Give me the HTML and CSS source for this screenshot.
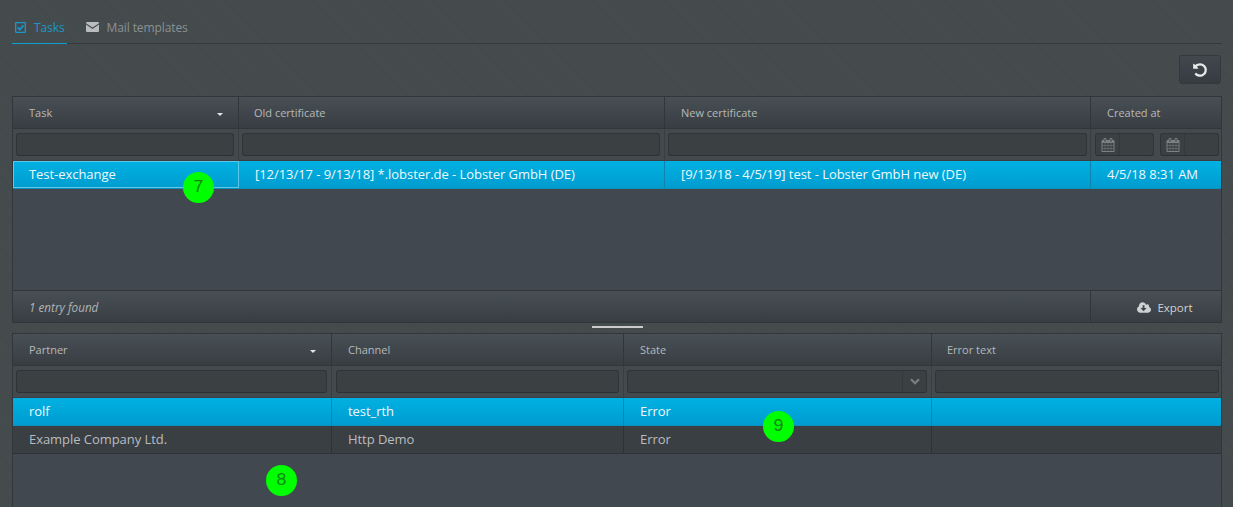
FILE: index.html
```html
<!DOCTYPE html>
<html lang="en">
<head>
<meta charset="utf-8">
<title>Tasks</title>
<link rel="stylesheet" href="styles.css">
</head>
<body>
<div class="page">
  <nav class="tabs">
    <a class="tab active">
      <svg class="tab-icon" viewBox="0 0 12 12"><path d="M1.500 0.700h9a.8.8 0 0 1 .8.8v9a.8.8 0 0 1-.8.8h-9a.8.8 0 0 1-.8-.8v-9a.8.8 0 0 1 .8-.8z" fill="none" stroke="currentColor" stroke-width="1.500"/><path d="M3 5.800l2.300 2.300L9.300 3.700" fill="none" stroke="currentColor" stroke-width="1.900"/></svg>
      Tasks
    </a>
    <a class="tab">
      <svg class="tab-icon mail" viewBox="0 0 13 10"><path d="M0 1a1 1 0 0 1 1-1h11a1 1 0 0 1 1 1v.3L6.500 5.600 0 1.300z" fill="currentColor"/><path d="M0 2.600l6.500 4.300L13 2.600V9a1 1 0 0 1-1 1H1a1 1 0 0 1-1-1z" fill="currentColor"/></svg>
      Mail templates
    </a>
  </nav>

  <div class="toolbar">
    <button class="icon-btn" type="button" aria-label="Reset">
      <svg viewBox="0 0 1792 1792" width="16" height="16"><path fill="currentColor" d="M1664 896q0 156-61 298t-164 245-245 164-298 61q-172 0-327-72.500t-264-204.500q-7-10-6.500-22.500t8.500-20.500l137-138q10-9 25-9 16 2 23 12 73 95 179 147t225 52q104 0 198.500-40.500t163.500-109.500 109.500-163.500 40.500-198.500-40.500-198.500-109.500-163.500-163.500-109.500-198.500-40.500q-98 0-188 35.500t-160 101.500l137 138q31 30 14 69-17 40-59 40h-448q-26 0-45-19t-19-45v-448q0-42 40-59 39-17 69 14l130 129q107-101 244.500-156.500t284.500-55.500q156 0 298 61t245 164 164 245 61 298z"/></svg>
    </button>
  </div>

  <section class="grid grid-top">
    <div class="row head">
      <div class="cell">Task<span class="sort"></span></div>
      <div class="cell">Old certificate</div>
      <div class="cell">New certificate</div>
      <div class="cell">Created at</div>
    </div>
    <div class="row filter">
      <div class="cell"><div class="input"></div></div>
      <div class="cell"><div class="input"></div></div>
      <div class="cell"><div class="input"></div></div>
      <div class="cell dates">
        <div class="input date"><span class="addon"><svg viewBox="0 0 1792 1792" width="14" height="14"><path fill="currentColor" d="M192 1664h288v-288h-288v288zm352 0h320v-288h-320v288zm-352-352h288v-320h-288v320zm352 0h320v-320h-320v320zm-352-384h288v-288h-288v288zm736 736h320v-288h-320v288zm-384-736h320v-288h-320v288zm768 736h288v-288h-288v288zm-384-352h320v-320h-320v320zm-352-864v-288q0-13-9.500-22.500t-22.500-9.500h-64q-13 0-22.500 9.500t-9.500 22.500v288q0 13 9.500 22.500t22.500 9.500h64q13 0 22.500-9.500t9.500-22.500zm736 864h288v-320h-288v320zm-384-384h320v-288h-320v288zm384 0h288v-288h-288v288zm32-480v-288q0-13-9.500-22.500t-22.500-9.500h-64q-13 0-22.500 9.500t-9.500 22.500v288q0 13 9.500 22.500t22.500 9.500h64q13 0 22.500-9.500t9.500-22.500zm384-64v1280q0 52-38 90t-90 38h-1408q-52 0-90-38t-38-90v-1280q0-52 38-90t90-38h128v-96q0-66 47-113t113-47h64q66 0 113 47t47 113v96h384v-96q0-66 47-113t113-47h64q66 0 113 47t47 113v96h128q52 0 90 38t38 90z"/></svg></span></div>
        <div class="input date"><span class="addon"><svg viewBox="0 0 1792 1792" width="14" height="14"><path fill="currentColor" d="M192 1664h288v-288h-288v288zm352 0h320v-288h-320v288zm-352-352h288v-320h-288v320zm352 0h320v-320h-320v320zm-352-384h288v-288h-288v288zm736 736h320v-288h-320v288zm-384-736h320v-288h-320v288zm768 736h288v-288h-288v288zm-384-352h320v-320h-320v320zm-352-864v-288q0-13-9.500-22.500t-22.500-9.500h-64q-13 0-22.500 9.500t-9.500 22.500v288q0 13 9.500 22.500t22.500 9.500h64q13 0 22.500-9.500t9.500-22.500zm736 864h288v-320h-288v320zm-384-384h320v-288h-320v288zm384 0h288v-288h-288v288zm32-480v-288q0-13-9.500-22.500t-22.500-9.500h-64q-13 0-22.500 9.500t-9.500 22.500v288q0 13 9.500 22.500t22.500 9.500h64q13 0 22.500-9.500t9.500-22.500zm384-64v1280q0 52-38 90t-90 38h-1408q-52 0-90-38t-38-90v-1280q0-52 38-90t90-38h128v-96q0-66 47-113t113-47h64q66 0 113 47t47 113v96h384v-96q0-66 47-113t113-47h64q66 0 113 47t47 113v96h128q52 0 90 38t38 90z"/></svg></span></div>
      </div>
    </div>
    <div class="row data selected">
      <div class="cell focus">Test-exchange</div>
      <div class="cell">[12/13/17 - 9/13/18] *.lobster.de - Lobster GmbH (DE)</div>
      <div class="cell">[9/13/18 - 4/5/19] test - Lobster GmbH new (DE)</div>
      <div class="cell">4/5/18 8:31 AM</div>
    </div>
    <div class="body-space"></div>
    <div class="foot">
      <div class="count">1 entry found</div>
      <div class="export">
        <svg viewBox="0 128 1920 1408" width="14" height="11"><path fill="currentColor" d="M1280 928q0-14-9-23t-23-9h-224v-352q0-13-9.500-22.500t-22.500-9.500h-192q-13 0-22.500 9.500t-9.500 22.500v352h-224q-14 0-23 9t-9 23q0 12 10 24l352 352q9 9 23 9t23-9l351-351q11-13 11-25zm640 224q0 159-112.500 271.500t-271.500 112.500h-1088q-185 0-316.500-131.500t-131.500-316.500q0-130 70-240t188-165q-2-30-2-43 0-212 150-362t362-150q156 0 285.500 87t188.500 231q71-62 166-62 106 0 181 75t75 181q0 76-41 138 130 31 213.500 135.500t83.500 238.500z"/></svg>
        Export
      </div>
    </div>
    <span class="marker marker-7">7</span>
  </section>

  <div class="splitter"><span class="handle"></span></div>

  <section class="grid grid-bottom">
    <div class="row head">
      <div class="cell">Partner<span class="sort"></span></div>
      <div class="cell">Channel</div>
      <div class="cell">State</div>
      <div class="cell">Error text</div>
    </div>
    <div class="row filter">
      <div class="cell"><div class="input"></div></div>
      <div class="cell"><div class="input"></div></div>
      <div class="cell"><div class="input select"><span class="addon-right"><svg viewBox="0 0 10 7" width="10" height="7"><path d="M1 1.300l4 3.900 4-3.900" fill="none" stroke="currentColor" stroke-width="2.200"/></svg></span></div></div>
      <div class="cell"><div class="input"></div></div>
    </div>
    <div class="row data selected">
      <div class="cell">rolf</div>
      <div class="cell">test_rth</div>
      <div class="cell">Error</div>
      <div class="cell"></div>
    </div>
    <div class="row data">
      <div class="cell">Example Company Ltd.</div>
      <div class="cell">Http Demo</div>
      <div class="cell">Error</div>
      <div class="cell"></div>
    </div>
    <span class="marker marker-8">8</span>
    <span class="marker marker-9">9</span>
  </section>
</div>
</body>
</html>
```

FILE: styles.css
```css
* { box-sizing: border-box; }

html, body {
  margin: 0;
  height: 100%;
  overflow: hidden;
}

body {
  font-family: "Open Sans", "Noto Sans", sans-serif;
  font-size: 13px;
  color: #c8cbcc;
  background-color: #454c4e;
  background-image: repeating-linear-gradient(45deg, rgba(0,0,0,.035) 0 1px, transparent 1px 3px);
}

.page {
  padding: 15px 11px 0 12px;
  height: 507px;
  display: flex;
  flex-direction: column;
}

.tabs {
  display: flex;
  height: 29px;
  border-bottom: 1px solid #33393d;
  flex: none;
}

.tab {
  display: flex;
  align-items: center;
  height: 29px;
  padding: 0 1px 5px 0;
  margin-right: 19px;
  font-size: 12px;
  letter-spacing: -0.1px;
  color: #8b9193;
  gap: 8px;
}

.tab.active {
  color: #1e95c9;
  border-bottom: 1px solid #0f9fd4;
  padding: 0 2px 4px 3px;
}

.tab-icon { width: 11px; height: 11px; }
.tab-icon.mail { width: 13px; height: 10px; color: #b9bdbe; }

.toolbar {
  flex: none;
  height: 52px;
  padding-top: 11px;
  display: flex;
  justify-content: flex-end;
}

.icon-btn {
  width: 42px;
  height: 29px;
  margin-right: 1px;
  padding: 0;
  display: flex;
  align-items: center;
  justify-content: center;
  color: #e8e9e9;
  background: linear-gradient(#41484e, #363b40);
  border: 1px solid #33393c;
  border-radius: 3px;
}

.grid {
  position: relative;
  border: 1px solid #30363a;
  background: #41484f;
  flex: none;
}

.grid-top {
  height: 227px;
  display: flex;
  flex-direction: column;
  --cols: 226px 426px 426px 1fr;
}

.grid-bottom {
  flex: 1;
  border-bottom: 0;
  --cols: 319px 292px 308px 1fr;
}

.row {
  display: grid;
  grid-template-columns: var(--cols);
  flex: none;
}

.cell {
  position: relative;
  display: flex;
  align-items: center;
  padding-left: 16px;
  border-right: 1px solid #30363a;
  min-width: 0;
  white-space: nowrap;
}

.cell:last-child { border-right: 0; }

.head {
  height: 32px;
  font-size: 11px;
  color: #b5b9ba;
  background: linear-gradient(#485055, #383d42);
  border-bottom: 1px solid #30363a;
}

.grid-top .head .cell:nth-child(2),
.grid-bottom .head .cell:nth-child(4) { padding-left: 15px; }

.sort {
  position: absolute;
  right: 15px;
  top: 16px;
  border: 3.500px solid transparent;
  border-top: 3.500px solid #e4e6e6;
  border-bottom: 0;
}

.filter {
  height: 32px;
  background: #424a4e;
}

.filter .cell {
  padding: 4px 4px 4px 3px;
  border-right-color: #383e42;
  border-bottom: 1px solid #383e42;
}

.filter .cell:last-child { padding-right: 2px; }
.grid-bottom .filter .cell:nth-child(2) { padding-left: 4px; }
.grid-top .filter .cell:nth-child(3) { padding-right: 3px; }

.input {
  flex: 1;
  height: 23px;
  background: #3b4042;
  border: 1px solid #2f3437;
  border-bottom-color: #2b3033;
  border-radius: 3px;
  display: flex;
  min-width: 0;
}

.filter .cell.dates { gap: 6px; padding-left: 4px; }

.addon {
  width: 24px;
  border-right: 1px solid #34393c;
  color: #7c8183;
  display: flex;
  align-items: center;
  justify-content: center;
}

.select { justify-content: flex-end; }

.addon-right {
  width: 24px;
  border-left: 1px solid #34393c;
  color: #7a8082;
  display: flex;
  align-items: center;
  justify-content: center;
}

.data {
  height: 28px;
  background: #3a3f44;
  color: #b9bdbf;
  border-bottom: 1px solid #2d3236;
  letter-spacing: -0.05px;
}

.data .cell { border-right-color: #2d3236; padding-bottom: 2px; }

.data.selected {
  color: #eef8fc;
  background: linear-gradient(#00b1e2, #009ccf);
  border-bottom-color: #0b8fbd;
}

.data.selected .cell { border-right-color: #0b85ad; }

.data.selected .cell.focus {
  outline: 1px solid #5cc9ea;
  outline-offset: -1px;
  border-right-color: transparent;
}

.body-space { flex: 1; }

.foot {
  flex: none;
  height: 32px;
  display: flex;
  padding-top: 1px;
  background: linear-gradient(#485055, #383d42);
  border-top: 1px solid #30363a;
  font-size: 11.500px;
}

.count {
  flex: 1;
  padding-left: 16px;
  display: flex;
  align-items: center;
  font-style: italic;
  font-size: 11.700px;
  color: #b0b4b5;
}

.export {
  width: 131px;
  margin-top: -1px;
  padding-top: 1px;
  border-left: 1px solid #30363a;
  padding-left: 18px;
  display: flex;
  align-items: center;
  justify-content: center;
  gap: 6px;
  color: #cfd2d3;
}

.splitter {
  flex: none;
  height: 10px;
  display: flex;
  justify-content: center;
}

.handle {
  width: 51px;
  height: 2px;
  margin-top: 3px;
  background: #c9cbcb;
}

.marker {
  position: absolute;
  width: 31px;
  height: 31px;
  border-radius: 50%;
  background: #00ff00;
  color: #0c8a16;
  font-family: "Liberation Mono", monospace;
  font-size: 18px;
  line-height: 30px;
  text-align: center;
}

.marker-7 { left: 170px; top: 75px; }
.marker-8 { left: 253px; top: 131px; }
.marker-9 { left: 750px; top: 77px; }
```
